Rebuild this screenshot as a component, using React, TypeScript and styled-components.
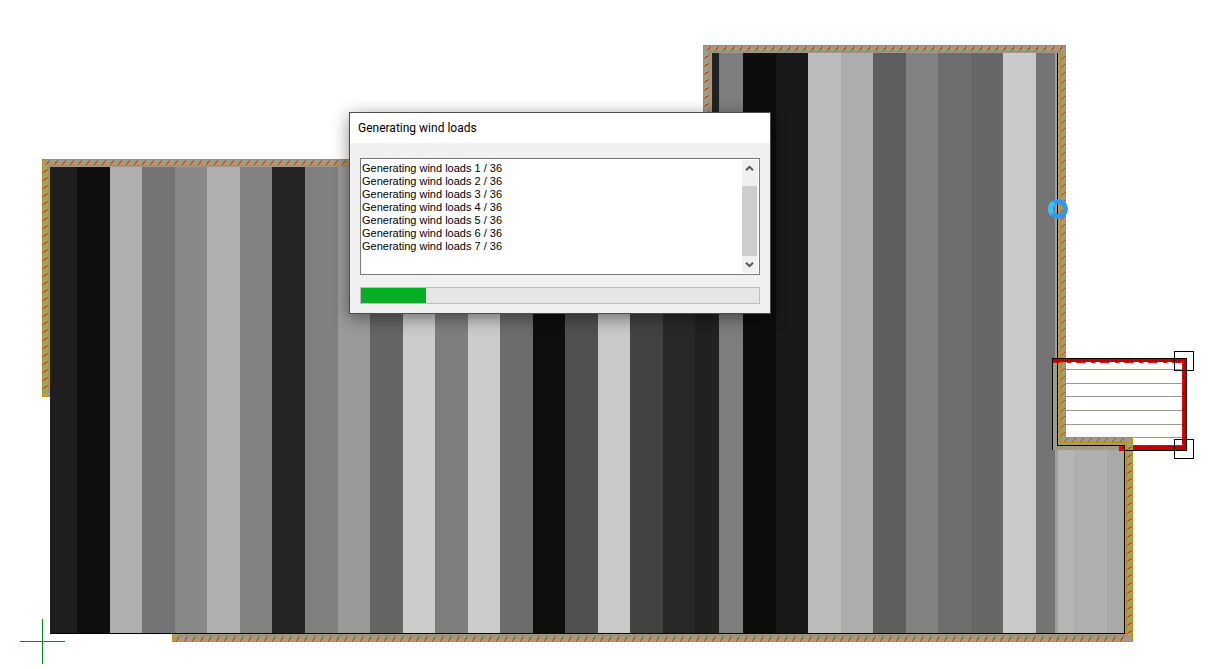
import React from "react";
import styled, { createGlobalStyle } from "styled-components";

const GlobalStyle = createGlobalStyle`
  * { box-sizing: border-box; }
  body { margin: 0; background: #fff; overflow: hidden; }
`;

const Workspace = styled.main`
  position: relative;
  min-height: 100vh;
  background: #fff;
  overflow: hidden;
`;

const Plan = styled.svg`
  display: block;
`;

const Dialog = styled.section`
  position: absolute;
  top: 112px;
  left: 349px;
  width: 422px;
  border: 1px solid #4d4d4d;
  background: #f0f0f0;
  color: #000;
  box-shadow: 0 4px 16px rgba(0, 0, 0, 0.45);
`;

const TitleBar = styled.header`
  display: flex;
  align-items: center;
  height: 30px;
  padding: 0 8px;
  background: #fff;
`;

const Title = styled.h1`
  margin: 0;
  font: 400 12px/16px Roboto, "Segoe UI", sans-serif;
`;

const DialogBody = styled.div`
  display: flex;
  flex-direction: column;
  gap: 12px;
  padding: 15px 10px 9px;
`;

const LogBox = styled.div`
  display: flex;
  justify-content: space-between;
  height: 117px;
  padding: 1px;
  border: 1px solid #7a7a7a;
  background: #fff;
`;

const LogList = styled.ul`
  margin: 0;
  padding: 2px 0;
  list-style: none;
  font: 400 11px/13px "Liberation Sans", Arial, sans-serif;
`;

const ScrollBar = styled.div`
  display: flex;
  flex-direction: column;
  width: 16px;
  background: #f0f0f0;
`;

const ScrollButton = styled.button`
  display: flex;
  align-items: center;
  justify-content: center;
  width: 15px;
  height: 17px;
  padding: 0;
  border: 0;
  background: transparent;
`;

const Track = styled.div`
  flex: 1;
  padding-top: 9px;
`;

const Thumb = styled.div`
  width: 15px;
  height: 100%;
  background: #cdcdcd;
`;

const Progress = styled.div`
  height: 17px;
  border: 1px solid #bcbcbc;
  background: #e6e6e6;
`;

const ProgressFill = styled.div`
  height: 100%;
  background: #06b025;
`;

const TOTAL = 36;
const steps = [1, 2, 3, 4, 5, 6, 7];
const progress = 16.4;

/* Roof strips: left edge, right edge, top edge, colour */
const strips: [number, number, number, string][] = [
  [50, 77, 167, "#1e1e1e"],
  [77, 110, 167, "#0e0e0e"],
  [110, 142, 167, "#afafaf"],
  [142, 175, 167, "#757575"],
  [175, 207, 167, "#888888"],
  [207, 240, 167, "#b0b0b0"],
  [240, 272, 167, "#818181"],
  [272, 305, 167, "#252525"],
  [305, 338, 167, "#808080"],
  [338, 370, 167, "#9a9a9a"],
  [370, 403, 167, "#656565"],
  [403, 435, 167, "#cccccc"],
  [435, 468, 167, "#7e7e7e"],
  [468, 500, 167, "#cccccc"],
  [500, 533, 167, "#6c6c6c"],
  [533, 565, 167, "#0e0e0e"],
  [565, 598, 167, "#505050"],
  [598, 630, 167, "#c9c9c9"],
  [630, 663, 167, "#424242"],
  [663, 695, 167, "#282828"],
  [695, 712, 167, "#202020"],
  [712, 719, 53, "#222222"],
  [719, 743, 53, "#7e7e7e"],
  [743, 776, 53, "#0d0d0d"],
  [776, 808, 53, "#191919"],
  [808, 841, 53, "#bcbcbc"],
  [841, 873, 53, "#adadad"],
  [873, 906, 53, "#5e5e5e"],
  [906, 938, 53, "#828282"],
  [938, 971, 53, "#6e6e6e"],
  [971, 1003, 53, "#676767"],
  [1003, 1036, 53, "#cacaca"],
  [1036, 1055, 53, "#747474"],
  [1055, 1058, 53, "#a0a0a0"],
  [1058, 1074, 450, "#b5b5b5"],
  [1074, 1107, 450, "#afafaf"],
  [1107, 1124, 450, "#a9a9a9"],
];

const planks = [369, 383, 396, 410, 424, 437];
const OCHRE = "#b99300";
const STONE = "#a09a86";
const BRICK = "#c8440c";

type WallProps = { x: number; y: number; w: number; h: number };

/* A run of wall filled with stone and crossed by a brick stroke every 8px */
const Wall = ({ x, y, w, h }: WallProps) => {
  const strokes: string[] = [];
  if (w > h) {
    for (let left = x + 3; left + 5 <= x + w; left += 8) strokes.push(`M${left} ${y + h}l4 -${h}`);
  } else {
    for (let top = y + 3; top + 5 <= y + h; top += 8) strokes.push(`M${x} ${top + 4}l${w} -4`);
  }
  return (
    <>
      <rect x={x} y={y} width={w} height={h} fill={STONE} />
      <path d={strokes.join("")} stroke={BRICK} fill="none" />
    </>
  );
};

const Chevron = ({ up }: { up?: boolean }) => (
  <svg width="9" height="7" viewBox="0 0 9 7" aria-hidden="true">
    <path d={up ? "M1 5.3 4.5 1.8 8 5.3" : "M1 1.7 4.5 5.2 8 1.7"} fill="none" stroke="#555" strokeWidth="2" />
  </svg>
);

const FloorPlan = () => (
  <Plan width="1218" height="669" viewBox="0 0 1218 669" shapeRendering="crispEdges" role="img" aria-label="Roof plan">
    {strips.map(([left, right, top, fill]) => (
      <rect key={left} x={left} y={top} width={right - left} height={633 - top} fill={fill} />
    ))}

    <path d="M42 159H712V167H50V397H42ZM703 45H1066V53H712V167H703Z" fill={STONE} />
    <Wall x={43} y={160} w={660} h={5} />
    <Wall x={43} y={166} w={5} h={230} />
    <Wall x={704} y={46} w={361} h={5} />
    <Wall x={704} y={52} w={5} h={115} />
    <path
      d="M50 396.5H42.5V159.5H703.5V45.5H1065.5V53M50 390.5H48.5V165.5H709.5V51.5H1060.5V53"
      fill="none"
      stroke={OCHRE}
    />

    <rect x="1058" y="53" width="8" height="392" fill={STONE} />
    <Wall x={1061} y={53} w={4} h={388} />

    <path d="M1053 362H1057V446H1124V450H1053Z" fill={STONE} />
    <rect x="1066" y="360" width="119" height="86" fill="#fff" />
    {planks.map((y) => (
      <path key={y} d={`M1066 ${y}.5H1185`} stroke={STONE} />
    ))}

    <path d="M1052 358H1187V451H1119V445H1182V362H1052Z" fill="#bd0000" />
    <path d="M1052 362.5H1182" stroke="#ff0000" strokeDasharray="9 6 4 5" />
    <path d="M1182.5 363V446M1122 445.5H1182" stroke="#ff0000" strokeDasharray="12 4" />
    <rect x="1119" y="446" width="4" height="4" fill="#ff0000" />

    <rect x="1058" y="437" width="75" height="8" fill={STONE} />
    <Wall x={1061} y={438} w={71} h={4} />
    <rect x="1125" y="442" width="8" height="200" fill={STONE} />
    <Wall x={1127} y={443} w={5} h={192} />
    <rect x="172" y="634" width="961" height="8" fill={STONE} />
    <Wall x={173} y={636} w={959} h={5} />

    <path
      d="M1060.5 51V442.5H1126.5V635.5H178.5V634M1065.5 45V437.5H1132.5V641.5H172.5V634"
      fill="none"
      stroke={OCHRE}
    />
    <path d="M1052 360.5H1066" stroke="#bd0000" strokeWidth="3" />
    <path d="M1052.5 450V358.5H1186.5V450.5H1124" fill="none" stroke="#000" />
    <path d="M1057.5 53V445.5H1124.5V633.5H50" fill="none" stroke="#000" />

    <rect x="1174.5" y="351.5" width="19" height="19" fill="none" stroke="#000" />
    <rect x="1174.5" y="439.5" width="19" height="19" fill="none" stroke="#000" />

    <path d="M42.5 619V664M20 641.5H65" stroke="#00900c" />

    <g shapeRendering="auto" fill="none" strokeWidth="5">
      <circle cx="1058" cy="209" r="7.5" stroke="#3096f8" />
      <path d="M1052.2 213.8A7.5 7.5 0 0 1 1053.8 202.8" stroke="#35c3fc" />
    </g>
  </Plan>
);

export default function App() {
  return (
    <>
      <GlobalStyle />
      <Workspace>
        <FloorPlan />
        <Dialog role="dialog" aria-labelledby="dialog-title">
          <TitleBar>
            <Title id="dialog-title">Generating wind loads</Title>
          </TitleBar>
          <DialogBody>
            <LogBox>
              <LogList>
                {steps.map((n) => (
                  <li key={n}>{`Generating wind loads ${n} / ${TOTAL}`}</li>
                ))}
              </LogList>
              <ScrollBar>
                <ScrollButton type="button" aria-label="Scroll up">
                  <Chevron up />
                </ScrollButton>
                <Track>
                  <Thumb />
                </Track>
                <ScrollButton type="button" aria-label="Scroll down">
                  <Chevron />
                </ScrollButton>
              </ScrollBar>
            </LogBox>
            <Progress role="progressbar" aria-label="Generating wind loads" aria-valuenow={7} aria-valuemax={TOTAL}>
              <ProgressFill style={{ width: `${progress}%` }} />
            </Progress>
          </DialogBody>
        </Dialog>
      </Workspace>
    </>
  );
}
